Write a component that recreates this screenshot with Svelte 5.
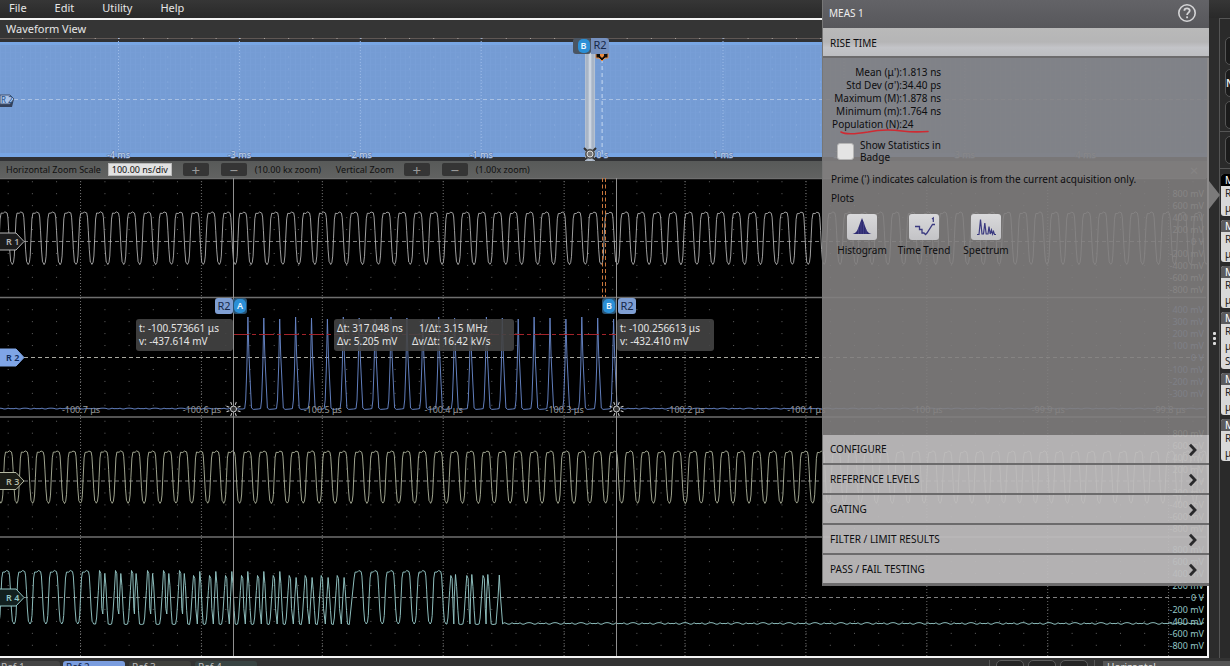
<script>
  const P = 15.92;
  const W = 1206;
  const jitter = (i) => ((i * 7919) % 13) / 13 - 0.5;

  const cycle = [
    [-4.2, 0.14], [-3.2, 0.03], [-1, 0.03], [0.6, 0], [2.8, 0.02], [3.6, 0.1], [4.4, 0.35],
    [5.4, 0.72], [6.4, 0.95], [7.2, 0.97], [8, 1], [9.2, 0.96], [10, 0.84], [10.8, 0.5]
  ];
  function clock(first, top, bottom, until = W) {
    const out = [];
    for (let c = first - P, i = 0; c < until + P; c += P, i++) {
      for (const [dx, v] of cycle) out.push(`${(c + dx).toFixed(1)},${(top + v * (bottom - top) + jitter(i + dx * 10 | 0) * 0.4).toFixed(1)}`);
    }
    return out.join(' ');
  }
  function noise(from, to, y, amp) {
    const out = [];
    for (let x = from, i = 0; x < to; x += 2, i++) out.push(`${x},${(y + jitter(i * i + i) * amp).toFixed(1)}`);
    return out.join(' ');
  }
  function pulses() {
    const out = [noise(0, 240, 230.6, 0.9)];
    for (let k = 0; k < 24; k++) {
      const x = 248.3 + k * 15.9;
      const peak = 139 + (k % 3);
      out.push(`${x - 6},231 ${x - 3.6},230.6 ${x - 2.6},222 ${x - 1.4},188 ${x - 0.4},${peak} ${x + 0.6},176 ${x + 2},206 ${x + 3.2},230 ${x + 5},231.4`);
    }
    out.push(noise(620, W, 230.6, 0.9));
    return out.join(' ');
  }
  function burst() {
    const T = 392.5, B = 446;
    const out = [];
    const wide = (c, last) => { for (const [dx, v] of last ? cycle.slice(0, -3) : cycle) out.push(`${(c + dx).toFixed(1)},${(T + v * (B - T)).toFixed(1)}`); };
    const run = (list) => list.forEach((c, i) => wide(c, i === list.length - 1));
    const pair = (a, b, ta, tb, dip) => out.push(
      `${a - 4.4},${B} ${a - 3.4},${B - 6} ${a - 1.6},${T + 20} ${a - 0.5},${ta} ${a + 0.8},${ta + 3} ${a + 1.8},${T + 38}`,
      `${(a + b) / 2 + 0.3},${dip} ${b - 1.4},${T + 26} ${b - 0.2},${tb} ${b + 0.9},${tb + 12} ${b + 2.2},${T + 40} ${b + 3.2},${B} ${b + 5},${B + 0.5}`
    );
    run([-10, 6, 22, 37.8, 53.7, 69.7, 85.7]);
    [[100, 105], [116, 121], [132, 136.3], [148, 152.8], [164, 169], [180, 184.5]].forEach(([a, b]) => pair(a, b, T, T + 3, B - 10));
    [[194, 200], [210, 216], [226, 232], [242, 248], [258, 264], [273.7, 280]].forEach(([a, b]) => pair(a, b, T + 5, T + 1, B));
    [[289.7, 296.3], [305.7, 312.3], [321.7, 328.3], [337.7, 344.3]].forEach(([a, b]) => pair(a, b, T + 5, T + 7, B));
    run([358.3, 374.3, 390.3, 406.2, 422.2, 438]);
    [[451.3, 455.7], [467.3, 472], [483.5, 488]].forEach(([a, b]) => pair(a, b, T + 5, T + 4, B));
    out.push(`496,${B} 498,420 499.3,397 500.6,420 502.6,${B}`);
    out.push(noise(504, W, 445.5, 1.6));
    return out.join(' ');
  }

  const rows = [
    { top: 0, center: 63.5, step: 200, first: 4, last: -4, color: '#b4b4b4', fill: '#1b1b1c', name: 'R 1', points: clock(4.3, 34, 86.5), dotsUp: 5, dotsDown: 4 },
    { top: 119.5, center: 179.5, step: 100, first: 4, last: -3, color: '#6685c6', fill: '#7fa5e6', name: 'R 2', points: pulses(), dotsUp: 4, dotsDown: 4 },
    { top: 239, center: 303, step: 200, first: 4, last: -4, color: '#b4b9a2', fill: '#1a1c15', name: 'R 3', points: clock(8.7, 273, 325.3), dotsUp: 5, dotsDown: 4 },
    { top: 359, center: 419.5, step: 200, first: 4, last: -4, color: '#93c6c5', fill: '#12201f', name: 'R 4', points: burst(), dotsUp: 4, dotsDown: 4 }
  ];
  const divs = Array.from({ length: 10 }, (_, i) => 80.5 + i * 120.9);
  const minor = Array.from({ length: 50 }, (_, i) => 8.2 + i * 24.18);
  const times = ['-100.7 μs', '-100.6 μs', '-100.5 μs', '-100.4 μs', '-100.3 μs', '-100.2 μs', '-100.1 μs', '-100 μs', '-99.9 μs', '-99.8 μs'];
  const overTimes = ['-4 ms', '-3 ms', '-2 ms', '-1 ms', '0 s', '1 ms', '2 ms', '3 ms', '4 ms'];
  const rays = [22, 68, 112, 158, 202, 248, 292, 338];

  const stats = [
    ["Mean (μ'):", '1.813 ns'],
    ["Std Dev (σ'):", '34.40 ps'],
    ['Maximum (M):', '1.878 ns'],
    ['Minimum (m):', '1.764 ns'],
    ['Population (N):', '24']
  ];
  const sections = ['CONFIGURE', 'REFERENCE LEVELS', 'GATING', 'FILTER / LIMIT RESULTS', 'PASS / FAIL TESTING'];
  const badges = [['R', 'μ'], ['R', 'μ'], ['R', 'μ'], ['R', 'μ', 'S'], ['R', 'μ'], ['R', 'μ']];
  const label = (n, r) => (n === 0 ? '0 V' : `${n * r.step} mV`);
</script>

<div class="app">
  <nav class="menu">
    <button>File</button><button>Edit</button><button>Utility</button><button>Help</button>
  </nav>

  <main class="view">
    <h1>Waveform View</h1>

    <div class="overview">
      <svg width="100%" height="123" aria-label="Overview">
        <defs>
          <pattern id="weave" width="5" height="6" patternUnits="userSpaceOnUse">
            <rect width="5" height="6" fill="#759cd4" />
            <rect width="1" height="6" fill="#789fd7" />
            <rect y="2" width="5" height="1" fill="#789fd7" opacity=".6" />
          </pattern>
        </defs>
        <rect width="100%" height="123" fill="#303134" />
        <rect y="4" width="100%" height="115" fill="url(#weave)" />
        <rect y="4" width="100%" height="3" fill="#78a6e4" />
        <rect y="115" width="100%" height="4" fill="#78a6e4" />
        <path d="M0 .5H1230" stroke="#5f5754" stroke-width="1" />
        <path d="M0 .5H1230" stroke="#b0a8a4" stroke-dasharray="1 23.18" stroke-dashoffset="2" />
        {#each [19, 31, 44, 50, 74, 87, 99] as y}
          <path d={`M0 ${y}H1230`} stroke="#8dafdf" stroke-dasharray="1 23.18" stroke-dashoffset="2" />
        {/each}
        <path d="M14 61.5H1230" stroke="#a9c1e4" stroke-dasharray="4 3" />
        {#each overTimes as t, i}
          <path d={`M${118.5 + i * 120.9} 0V119`} stroke={i === 4 ? '#c5d8f2' : '#9dbbe8'} stroke-dasharray={i === 4 ? '4 3' : '1 2'} />
          <text x={118.5 + i * 120.9} y="120" class="tick over">{t}</text>
        {/each}
        <path d="M0 57H10l4 4-2 8H0Z" fill="#33405a" />
        <path d="M0 57H10l4 4-4 5H0Z" fill="#a9c3ea" stroke="#44536e" />
        <text x="1" y="65" font-size="8" fill="#1f4e86">R 2</text>
        <rect x="585" y="14" width="10" height="109" fill="#b4c0d0" />
        <path d="M587 14V123M593 14V123" stroke="#9eabbd" />
        <path d="M590 14V110" stroke="#cdd6e2" stroke-width="2" />
        <g stroke="#333" stroke-width="2" fill="none">
          <path d="M584 110l4 4m8-4-4 4m-8 8 4-3m8 3-4-3" />
          <circle cx="590" cy="116" r="4" stroke="#555" />
        </g>
        <circle cx="590" cy="116" r="3" stroke="#ddd" fill="#777" />
        <path d="M596 15h12v5h-3l-3 3-3-3h-3Z" fill="#100c08" stroke="#e98a3f" />
        <path d="M600 16h4v2l-2 2-2-2Z" fill="#e98a3f" />
      </svg>
      <span class="tag over-b"><i>B</i></span><span class="tag over-r">R2</span>
    </div>

    <div class="zoom">
      <label for="scale">Horizontal Zoom Scale</label>
      <input id="scale" value="100.00 ns/div" />
      <button aria-label="Horizontal zoom in">+</button>
      <button aria-label="Horizontal zoom out">−</button>
      <span class="hz">(10.00 kx zoom)</span>
      <span class="vz">Vertical Zoom</span>
      <button aria-label="Vertical zoom in">+</button>
      <button aria-label="Vertical zoom out">−</button>
      <span>(1.00x zoom)</span>
      <button class="close" aria-label="Close zoom">×</button>
    </div>

    <div class="plots">
      <svg width="100%" height="478" aria-label="Waveforms">
        {#each divs as x}
          <path d={`M${x} 0V478`} stroke="#6c6c6c" stroke-dasharray="1 2" />
        {/each}
        {#each rows as r, i}
          {#each Array.from({ length: r.dotsUp + r.dotsDown + 1 }, (_, k) => r.center + (k - r.dotsUp) * 11.95) as y}
            {#if y !== r.center}
              {#each minor as x}<rect x={x - 0.5} y={y - 0.5} width="1" height="1" fill="#626262" />{/each}
            {/if}
          {/each}
          <path d={`M24 ${r.center}H1206`} stroke={i === 1 ? '#a9a9a0' : '#808080'} stroke-dasharray="4 3" />
          <polyline points={r.points} fill="none" stroke={r.color} stroke-width="1" opacity={i === 2 || i === 0 ? 0.88 : 0.95} />
          {#each Array.from({ length: r.first - r.last + 1 }, (_, k) => r.first - k) as n}
            <text x="1204" y={r.center + 3.5 - n * 11.9} class="volt" fill={r.color}>{label(n, r)}</text>
          {/each}
          <path d={`M0 ${r.center - 8.5}H16L24 ${r.center}L16 ${r.center + 8.5}H0`} fill={r.fill} stroke={i === 1 ? '#7fa5e6' : r.color} stroke-width="1" />
          <text x="6" y={r.center + 3.5} class="handle" fill={i === 1 ? '#0d2a5a' : r.color}>{r.name}</text>
        {/each}
        {#each times as t, i}<text x={81 + i * 120.9} y="235" class="tick">{t}</text>{/each}
        <g stroke="#6f6f6f" stroke-width="1.4">
          <path d="M0 .5H1206M0 119.5H1206M0 239H1206M0 359H1206" />
        </g>
        <path d="M602.5 0V119M605.5 0V119" stroke="#c8763c" stroke-dasharray="4 2.5" />
        <path d="M234 156.5H616" stroke="#a3232a" stroke-dasharray="15 3 4 3" />
        <g stroke="#909090"><path d="M233.5 0V478M616.5 0V478" /></g>
        {#each [233.5, 616.5] as x}
          <g transform={`translate(${x} 231)`} stroke="#d0d0d0" fill="none">
            <circle r="3" fill="#333" />
            {#each rays as a}<path d="M4.5 0H7.5" transform={`rotate(${a})`} />{/each}
          </g>
        {/each}
      </svg>
      <span class="tag a1">R2</span><span class="tag round a2"><i>A</i></span>
      <span class="tag round b1"><i>B</i></span><span class="tag b2">R2</span>
      <div class="readout ra"><p>t: -100.573661 μs</p><p>v: -437.614 mV</p></div>
      <div class="readout rd"><p>Δt: 317.048 ns</p><p>1/Δt: 3.15 MHz</p><p>Δv: 5.205 mV</p><p>Δv/Δt: 16.42 kV/s</p></div>
      <div class="readout rb"><p>t: -100.256613 μs</p><p>v: -432.410 mV</p></div>
    </div>
  </main>

  <aside class="side">
    <div class="grip"><b></b><b></b><b></b></div>
    <div class="rail">
      <div class="tools"><button aria-label="Cursors"></button><button>N</button><button aria-label="Search"></button></div>
      <div class="tools more"><button aria-label="More"></button></div>
      <div class="badges">
        {#each badges as lines, i}
          <div class="badge" class:active={i === 0}>
            <header>M</header>
            {#each lines as l}<p>{l}</p>{/each}
          </div>
        {/each}
      </div>
    </div>
  </aside>

  <footer>
    <button class="ref plain">Ref 1</button><button class="ref on">Ref 2</button><button class="ref r3">Ref 3</button><button class="ref r4">Ref 4</button>
    <div class="acts"><button aria-label="Add math"></button><button aria-label="Add ref"></button><button aria-label="Add bus"></button></div>
    <button class="hor">Horizontal</button>
  </footer>

  <section class="panel">
    <header class="head">
      <h2>MEAS 1</h2>
      <button aria-label="Help">
        <svg width="20" height="20" viewBox="0 0 20 20" fill="none" stroke="#d4d4d6">
          <circle cx="10" cy="10" r="8.2" stroke-width="1.6" />
          <path d="M7.4 7.8C7.4 4.6 12.8 4.7 12.7 7.7C12.6 9.7 10.1 9.6 10.1 12" stroke-width="1.8" />
          <path d="M10.1 13.4V15.2" stroke-width="1.9" />
        </svg>
      </button>
    </header>
    <button class="row open">RISE TIME</button>
    <div class="body">
      <table>
        <tbody>
          {#each stats as [k, v]}<tr><th>{k}</th><td>{v}</td></tr>{/each}
        </tbody>
      </table>
      <svg class="mark" width="90" height="8" viewBox="0 0 90 8" fill="none"><path d="M1 4C6 7 16 6 28 4C40 1.500 50 1.500 62 3C70 4 80 4 88 3.500" stroke="#cf2a32" stroke-width="1.6" stroke-linecap="round" /></svg>
      <label class="check"><input type="checkbox" /><span>Show Statistics in<br />Badge</span></label>
      <p class="note">Prime (') indicates calculation is from the current acquisition only.</p>
      <h3>Plots</h3>
      <div class="kinds">
        <button>
          <svg width="30" height="26" viewBox="0 0 30 26"><path d="M5.500 20C10 19 11 15 13 9L15 4L17 9C19 15 20 19 24.500 20Z" fill="#2e2b72" /><path d="M11.500 14V20M14 8V20M16.500 9V20M19 15V20" stroke="#59579a" stroke-width=".5" /></svg>
          <span>Histogram</span>
        </button>
        <button>
          <svg width="30" height="26" viewBox="0 0 30 26" fill="none" stroke="#3b3a80" stroke-width="1.300"><path d="M6 12.500H10.500V15.500H13V19H15L16.500 20.500L18 19L23.500 10.500H26" /><path d="M23 5L24.300 4V8" stroke-width="1.200" /></svg>
          <span>Time Trend</span>
        </button>
        <button>
          <svg width="30" height="26" viewBox="0 0 30 26" fill="none" stroke="#3b3a80" stroke-width="1.200"><path d="M6 20.500H8L9.500 5.500L11 20L12.500 20L13.800 9L15.200 20L17 20L18 12.500L19.200 20L20.500 16L21.500 20L22.500 17.500L23.500 20.500H25" /></svg>
          <span>Spectrum</span>
        </button>
      </div>
    </div>
    {#each sections as s}
      <button class="row">{s}
        <svg width="10" height="14" viewBox="0 0 10 14" fill="none" stroke="#29292b" stroke-width="2.800"><path d="M2 1.800L7 7L2 12.200" /></svg>
      </button>
    {/each}
  </section>
</div>

<style>
  :global(body) { background: #2d2d2d; }
  * { box-sizing: border-box; }
  .app {
    position: relative; min-height: 100vh; overflow: hidden;
    display: grid; grid-template: 18px 1fr 8px / minmax(0, 1fr) 21px;
    background: #2e2e2e; color: #e6e6e6;
    font: 10px/13px "Noto Sans", "Open Sans", sans-serif;
  }
  button { border: 0; padding: 0; margin: 0; background: none; color: inherit; font: inherit; text-align: left; }
  h1, h2, h3, p { margin: 0; font-weight: 400; }
  svg { display: block; }

  .menu { grid-column: 1 / -1; display: flex; gap: 28px; padding: 0 9px 2px; background: linear-gradient(#363636, #292929); font-size: 11px; line-height: 16px; }
  .view { min-width: 0; border: 2px solid #f4f4f4; border-left: 0; display: flex; flex-direction: column; background: #000; overflow: hidden; }
  h1 { height: 18px; padding-left: 6px; background: #353535; font-size: 11px; line-height: 18px; }
  .overview, .plots { position: relative; overflow: hidden; }
  .plots { flex: 1; }
  .tick { font-size: 9px; fill: #9a9a9a; text-anchor: middle; }
  .tick.over { fill: #c6d6ee; stroke: #5878aa; stroke-width: 1px; paint-order: stroke; }
  .volt { font-size: 9px; text-anchor: end; }
  .handle { font-size: 9px; font-weight: 600; }

  .zoom { display: flex; align-items: center; height: 17px; padding-left: 6px; background: linear-gradient(#585a59, #616261); color: #111; font-size: 9px; }
  .zoom input { width: 64px; height: 13px; margin: 0 11px 0 7px; border: 1px solid #bbb; padding: 0; background: #e2e2e2; text-align: center; font: inherit; color: #111; }
  .zoom button { width: 26px; height: 13px; margin-right: 12px; border-radius: 2px; background: #353535; color: #999; font-size: 15px; line-height: 12px; text-align: center; }
  .zoom .hz { width: 81px; }
  .zoom .vz { width: 68px; }
  .zoom button + span { margin-left: -4px; }
  .zoom .close { margin: 0 0 0 auto; background: none; color: #aaa; }

  .tag { position: absolute; top: 120px; width: 18px; height: 16px; border-radius: 3px; background: #7f9fd3; color: #16284a; font-size: 11px; line-height: 16px; text-align: center; }
  .tag i { display: block; width: 12px; height: 14px; margin: 1px auto; border-radius: 5px; background: #2b8fd6; color: #eaf6ff; font: 600 9px/14px "Noto Sans", sans-serif; }
  .round { width: 14px; background: #2a5475; }
  .a1 { left: 215px; } .a2 { left: 233px; } .b1 { left: 602px; } .b2 { left: 618px; }
  .over-b { top: 0; left: 573px; background: #4a5563; padding-left: 3px; line-height: 14px; }
  .over-r { top: 0; left: 591px; background: #7590bf; border-radius: 0 3px 3px 0; line-height: 14px; }
  .readout { position: absolute; top: 141px; padding: 3px; border-radius: 3px; background: rgba(68, 68, 68, .9); color: #e4e4e4; white-space: nowrap; }
  .ra { left: 136px; width: 97px; }
  .rb { left: 617px; width: 97px; }
  .rd { left: 334px; width: 180px; display: grid; grid-template-columns: 75px 1fr; }
  .rd p:nth-child(2) { padding-left: 7px; }

  .side { display: flex; min-width: 0; background: #2c2c2c; }
  .grip { flex: 0 0 10px; display: flex; flex-direction: column; align-items: center; gap: 2px; padding-top: 314px; }
  .grip b { width: 3px; height: 3px; background: #ddd; border-radius: 1px; }
  .rail { flex: 1; min-width: 0; border-left: 1px solid #555; border-top: 1px solid #555; overflow: hidden; background: #2a2a2a; }
  .tools { display: flex; flex-direction: column; gap: 4px; padding: 18px 0 2px 5px; border-bottom: 1px solid #555; }
  .tools button { flex: none; width: 24px; height: 28px; border: 1px solid #555; border-radius: 5px; background: #1b1b1b; color: #eee; font-weight: 600; }
  .tools.more { padding-top: 4px; padding-bottom: 4px; }
  .badges { display: flex; flex-direction: column; gap: 4px; padding: 5px 0 0 1px; }
  .badge { width: 40px; border-radius: 3px; overflow: hidden; background: #d9d9d9; color: #222; line-height: 15px; }
  .badge header { height: 12px; padding-left: 4px; background: #5b5b5d; color: #fff; line-height: 12px; }
  .badge.active header { background: #000; }
  .badge p { padding-left: 4px; }

  footer { grid-column: 1 / -1; display: flex; height: 8px; padding-top: 3px; overflow: hidden; background: #333; }
  footer button { flex: none; height: 12px; }
  .ref { width: 62px; margin-right: 4px; padding-left: 3px; border-radius: 3px; background: #454545; color: #bbb; line-height: 12px; }
  .ref.plain { width: 60px; margin-right: 3px; padding-left: 1px; }
  .ref.on { background: #7a9ddf; color: #14264a; }
  .r3 { background: #3f403c; } .r4 { background: #394443; }
  .acts { display: flex; gap: 4px; margin: -1px 8px 0 auto; padding: 0 6px; border-left: 1px solid #555; border-right: 1px solid #555; }
  .acts button { width: 28px; border: 1px solid #5c5c5c; border-radius: 5px; background: #262626; }
  .hor { width: 127px; padding-left: 4px; background: #555; color: #ddd; line-height: 12px; }

  .panel { position: absolute; top: 0; right: 21px; width: 387px; color: #0d0d0f; border-bottom: 3px solid #6d6c6d; border-left: 1px solid #777; }
  .panel::after { content: ""; position: absolute; left: 100%; top: 181px; border: 14px solid transparent; border-left: 11px solid #7b7a7a; border-right: 0; }
  .head { display: flex; justify-content: space-between; align-items: center; height: 28px; padding: 0 12px 2px 6px; background: linear-gradient(#636367, #57575b); color: #eee; }
  h2 { font-size: 10px; }
  .row { display: flex; align-items: center; justify-content: space-between; width: 100%; height: 30px; padding: 1px 11px 0 7px; border-bottom: 2px solid #6c6b6c; background: rgba(190, 188, 189, .94); }
  .row:last-child { height: 28px; border-bottom: 0; }
  .row.open { padding-top: 3px; background: linear-gradient(#b9b9b9, #b5b5b6 50%, #c3c4c8 70%, #bdbec1); }
  .body { position: relative; height: 377px; padding: 8px; background: rgba(130, 128, 128, .9); }
  table { border-collapse: collapse; }
  th, td { padding: 0; font-weight: 400; line-height: 13px; }
  th { width: 71px; text-align: right; white-space: nowrap; }
  .mark { position: absolute; left: 17px; top: 70px; }
  .check { display: flex; align-items: center; gap: 6px; margin-top: 8px; line-height: 12px; }
  .check input { appearance: none; width: 17px; height: 17px; margin: 0 0 0 6px; border: 1px solid #b5b5b5; border-radius: 3px; background: #e4e4e4; }
  .note { margin-top: 10px; }
  h3 { font-size: 10px; margin-top: 6px; }
  .kinds { display: flex; padding-top: 9px; }
  .kinds button { display: flex; flex-direction: column; align-items: center; gap: 4px; width: 62px; white-space: nowrap; }
  .kinds svg { background: linear-gradient(#d9d9db, #c3c3c6); border-radius: 3px; }
</style>
